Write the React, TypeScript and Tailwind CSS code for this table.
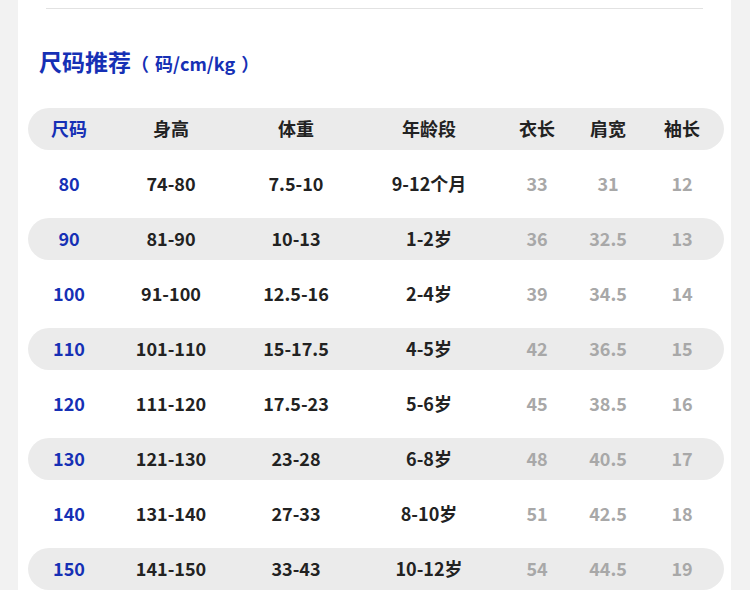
import React from 'react';

const headers = ['尺码', '身高', '体重', '年龄段', '衣长', '肩宽', '袖长'];

const rows: string[][] = [
  ['80', '74-80', '7.5-10', '9-12个月', '33', '31', '12'],
  ['90', '81-90', '10-13', '1-2岁', '36', '32.5', '13'],
  ['100', '91-100', '12.5-16', '2-4岁', '39', '34.5', '14'],
  ['110', '101-110', '15-17.5', '4-5岁', '42', '36.5', '15'],
  ['120', '111-120', '17.5-23', '5-6岁', '45', '38.5', '16'],
  ['130', '121-130', '23-28', '6-8岁', '48', '40.5', '17'],
  ['140', '131-140', '27-33', '8-10岁', '51', '42.5', '18'],
  ['150', '141-150', '33-43', '10-12岁', '54', '44.5', '19'],
];

const grid = 'grid grid-cols-[82px_122px_128px_138px_78px_64px_84px] items-center h-[42px] pb-[2px] rounded-full';

function cellColor(i: number) {
  if (i === 0) return 'text-[#1630b5]';
  if (i >= 4) return 'text-[#a8a8a8]';
  return 'text-[#222222]';
}

export default function App() {
  return (
    <div
      className="min-h-[590px] bg-[#f2f2f2] flex"
      style={{ fontFamily: '"Noto Sans CJK SC", "Noto Sans", sans-serif' }}
    >
      <div className="ml-[18px] w-[713px] bg-white pt-2 pb-6">
        <div className="mx-[28px] border-t border-[#e2e2e2]" />
        <h2 className="mt-[36px] ml-[21px] flex items-baseline text-[#1630b5] font-bold">
          <span className="text-[23px] leading-8">尺码推荐</span>
          <span className="text-[18px]">（</span>
          <span className="text-[18px] ml-[6px]">码/cm/kg</span>
          <span className="text-[18px] ml-[6px]">）</span>
        </h2>
        <div className="mt-[31px] ml-[10px] w-[696px] flex flex-col gap-[13px]">
          <div className={`${grid} bg-[#ebebeb] text-[18px] font-bold`}>
            {headers.map((h, i) => (
              <div key={h} className={`text-center ${i === 0 ? 'text-[#1630b5]' : 'text-[#222222]'}`}>
                {h}
              </div>
            ))}
          </div>
          {rows.map((r, ri) => (
            <div key={r[0]} className={`${grid} text-[18px] font-bold ${ri % 2 === 1 ? 'bg-[#ebebeb]' : ''}`}>
              {r.map((c, i) => (
                <div key={i} className={`text-center ${cellColor(i)}`}>
                  {c}
                </div>
              ))}
            </div>
          ))}
        </div>
      </div>
    </div>
  );
}
